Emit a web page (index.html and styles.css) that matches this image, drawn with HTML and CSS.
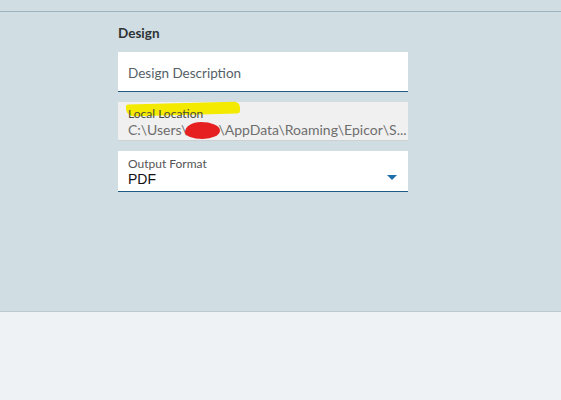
FILE: index.html
```html
<!DOCTYPE html>
<html>
<head>
<meta charset="utf-8">
<link rel="stylesheet" href="styles.css">
</head>
<body>
<div class="topbar"></div>
<div class="panel">
  <div class="form">
    <div class="title">Design</div>
    <div class="field field-input">
      <span class="placeholder">Design Description</span>
    </div>
    <div class="field field-readonly">
      <span class="label"><span class="hl"></span><span class="label-text">Local Location</span></span>
      <span class="value">C:\Users\<span class="user"><span class="redact"></span></span>\AppData\Roaming\Epicor\S...</span>
    </div>
    <div class="field field-select">
      <span class="label">Output Format</span>
      <span class="select-value">PDF</span>
      <svg class="caret" width="10" height="5" viewBox="0 0 10 5"><polygon points="0,0 10,0 5,5" fill="#1b6ea8"/></svg>
    </div>
  </div>
</div>
<div class="footer"></div>
</body>
</html>
```
FILE: styles.css
```css
html, body {
  margin: 0;
  padding: 0;
  width: 561px;
  height: 400px;
  overflow: hidden;
  background: #eef2f5;
  font-family: "Source Sans Pro", Lato, "Open Sans", sans-serif;
}
.topbar {
  height: 11px;
  background: #d0dde2;
}
.panel {
  background: #d0dde2;
  height: 299px;
  border-top: 1px solid #9db4bf;
  border-bottom: 1px solid #bccacf;
}
.form {
  margin-left: 118px;
  width: 290px;
  padding-top: 12px;
  display: flex;
  flex-direction: column;
}
.title {
  font-weight: bold;
  font-size: 13.5px;
  color: #2e3336;
  height: 18px;
  line-height: 18px;
  margin-bottom: 10px;
}
.field {
  position: relative;
  height: 39px;
  box-sizing: border-box;
  padding: 0 10px;
  margin-bottom: 10px;
  display: flex;
  flex-direction: column;
}
.field-input {
  background: #fff;
  border-bottom: 1px solid #1f5a82;
  justify-content: center;
  height: 40px;
}
.placeholder {
  font-size: 13.5px;
  color: #555f66;
  padding-top: 2px;
}
.field-readonly {
  background: #f0f0f0;
  border-bottom: 1px solid #cdd1d3;
  padding-top: 5px;
}
.label {
  position: relative;
  font-size: 11.5px;
  color: #444;
  line-height: 14px;
  height: 14px;
}
.field-readonly .label { color: #4a4a3a; font-size: 12px; }
.label-text { position: relative; }
.hl {
  position: absolute;
  left: -2px;
  top: -4px;
  width: 114px;
  height: 12px;
  background: #f3ea00;
  border-radius: 2px 6px 3px 8px;
  transform: skewY(-1.5deg);
}
.value {
  font-size: 14px;
  color: #6e6e6e;
  line-height: 18px;
  white-space: nowrap;
}
.user {
  position: relative;
  display: inline-block;
  width: 31px;
  height: 14px;
  vertical-align: -2px;
}
.redact {
  position: absolute;
  left: -2px;
  top: -1px;
  width: 35px;
  height: 17px;
  background: #e62020;
  border-radius: 45% 55% 50% 50% / 60% 50% 50% 40%;
}
.field-select {
  background: #fff;
  border-bottom: 1px solid #1f5a82;
  height: 41px;
  padding-top: 6px;
}
.field-select .label { color: #555; font-size: 12px; }
.select-value {
  font-family: "Liberation Sans", Arial, sans-serif;
  font-size: 14px;
  color: #111;
  line-height: 16px;
}
.caret {
  position: absolute;
  right: 11px;
  top: 24px;
}
```
